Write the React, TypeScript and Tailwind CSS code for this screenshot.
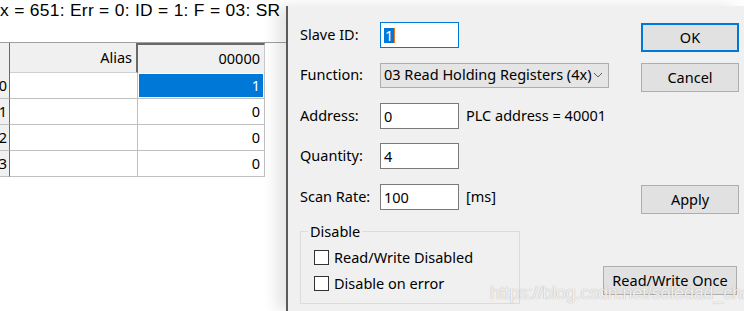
import React from 'react';

const ui = { fontFamily: '"Noto Sans", "Open Sans", sans-serif' };

const rows = [
  { n: '0', v: '1' },
  { n: '1', v: '0' },
  { n: '2', v: '0' },
  { n: '3', v: '0' },
];

const Field = ({ label, children }: { label: string; children: React.ReactNode }) => (
  <div className="flex h-[26px] items-center">
    <span className="w-[80px] shrink-0 text-[14.5px] text-black">{label}</span>
    {children}
  </div>
);

const TextBox = ({ value, focused }: { value: string; focused?: boolean }) => (
  <div
    className={`flex h-[26px] w-[79px] shrink-0 items-center bg-white px-[3px] text-[14.5px] ${
      focused ? 'border border-[#0078d7]' : 'border border-[#7a7a7a]'
    }`}
  >
    {focused ? (
      <span className="flex items-center">
        <span className="bg-[#0078d7] px-[1px] leading-[15px] text-white">{value}</span>
        <span className="h-[15px] w-px bg-[#e87b1b]" />
      </span>
    ) : (
      <span className="leading-none">{value}</span>
    )}
  </div>
);

const Btn = ({ label, w = 'w-[98px]', primary }: { label: string; w?: string; primary?: boolean }) => (
  <div
    className={`flex h-[29px] ${w} shrink-0 items-center justify-center bg-[#e1e1e1] text-[14.5px] text-black ${
      primary ? 'border-2 border-[#0078d7]' : 'border border-[#adadad]'
    }`}
  >
    {label}
  </div>
);

const Check = ({ label }: { label: string }) => (
  <div className="flex h-[15px] items-center gap-[5px]">
    <span className="h-[15px] w-[15px] border border-[#333] bg-white" />
    <span className="text-[14.5px] text-black">{label}</span>
  </div>
);

export default function App() {
  return (
    <div className="relative h-[311px] w-[744px] overflow-hidden bg-white" style={ui}>
      {/* status line + grid behind the dialog */}
      <div className="flex flex-col">
        <div
          className="h-[42px] w-[290px] overflow-hidden whitespace-nowrap text-[17.4px] leading-[20px] tracking-[0.3px] text-black"
          style={{ fontFamily: '"Liberation Sans", Arial, sans-serif' }}
        >
          x = 651: Err = 0: ID = 1: F = 03: SR =
        </div>
        <div className="h-px w-[290px] bg-[#a0a0a0]" />
        <div className="ml-[-11px] flex flex-col text-[14.5px]">
          <div className="flex h-[30px]">
            <div className="w-[21px] border-r border-[#696969] bg-[#f0f0f0]" />
            <div className="flex w-[128px] items-center justify-end border-r-2 border-b border-[#696969] border-b-[#d0d0d0] bg-[#f0f0f0] pr-[4px]">
              Alias
            </div>
            <div className="flex w-[127px] items-center justify-end border-t-2 border-r border-[#696969] border-r-[#c8c8c8] bg-[#f0f0f0] pr-[4px]">
              00000
            </div>
          </div>
          {rows.map((r, i) => (
            <div key={r.n} className="flex h-[26px]">
              <div className="flex w-[21px] items-center justify-end border-r border-b border-[#696969] border-b-[#c0c0c0] bg-[#f0f0f0] pr-[2px]">
                {r.n}
              </div>
              <div className="w-[128px] border-r border-b border-[#c0c0c0]" />
              <div className="flex w-[127px] border-r border-b border-[#c0c0c0] p-px">
                <div
                  className={`flex flex-1 items-center justify-end pr-[3px] ${
                    i === 0 ? 'bg-[#0078d7] text-white' : 'text-black'
                  }`}
                >
                  {r.v}
                </div>
              </div>
            </div>
          ))}
        </div>
      </div>

      {/* dialog window */}
      <div className="absolute top-[6px] left-[286px] flex h-[305px] w-[458px] border-l-2 border-[#5a5a5a] bg-[#f0f0f0] shadow-[-10px_0_14px_rgba(0,0,0,0.10)]">
        <div className="flex min-w-0 flex-1 flex-col pl-[12px]">
          <div className="mt-[16px]">
            <Field label="Slave ID:">
              <TextBox value="1" focused />
            </Field>
          </div>
          <div className="mt-[14px]">
            <Field label="Function:">
              <div className="flex h-[25px] w-[229px] shrink-0 items-center justify-between border border-[#adadad] bg-[#e5e5e5] pr-[5px] pl-[3px] text-[14.5px]">
                <span>03 Read Holding Registers (4x)</span>
                <svg width="10" height="6" viewBox="0 0 10 6" fill="none">
                  <path d="M1 1l4 4 4-4" stroke="#606060" strokeWidth="1" />
                </svg>
              </div>
            </Field>
          </div>
          <div className="mt-[15px]">
            <Field label="Address:">
              <TextBox value="0" />
              <span className="ml-[7px] shrink-0 text-[14.5px]">PLC address = 40001</span>
            </Field>
          </div>
          <div className="mt-[14px]">
            <Field label="Quantity:">
              <TextBox value="4" />
            </Field>
          </div>
          <div className="mt-[15px]">
            <Field label="Scan Rate:">
              <TextBox value="100" />
              <span className="ml-[7px] shrink-0 text-[14.5px]">[ms]</span>
            </Field>
          </div>
          <div className="relative mt-[21px] flex h-[73px] w-[220px] shrink-0 flex-col gap-[11px] border border-[#dcdcdc] pt-[18px] pl-[13px]">
            <span className="absolute top-[-10px] left-[7px] bg-[#f0f0f0] px-[2px] text-[14.5px] leading-[18px]">
              Disable
            </span>
            <Check label="Read/Write Disabled" />
            <Check label="Disable on error" />
          </div>
        </div>
        <div className="flex w-[143px] shrink-0 flex-col items-end pr-[5px]">
          <div className="mt-[17px]">
            <Btn label="OK" primary />
          </div>
          <div className="mt-[11px]">
            <Btn label="Cancel" />
          </div>
          <div className="mt-[93px]">
            <Btn label="Apply" />
          </div>
          <div className="mt-[52px] mr-[2px]">
            <Btn label="Read/Write Once" w="w-[134px]" />
          </div>
        </div>
      </div>

      {/* watermark */}
      <div
        className="absolute top-[280px] left-[490px] text-[18px] tracking-[-0.2px] text-white/85 [text-shadow:0_0_1px_rgba(110,110,110,0.7)]"
        style={{ fontFamily: '"Liberation Sans", Arial, sans-serif' }}
      >
        https://blog.csdn.net/soledad_chao
      </div>
    </div>
  );
}
